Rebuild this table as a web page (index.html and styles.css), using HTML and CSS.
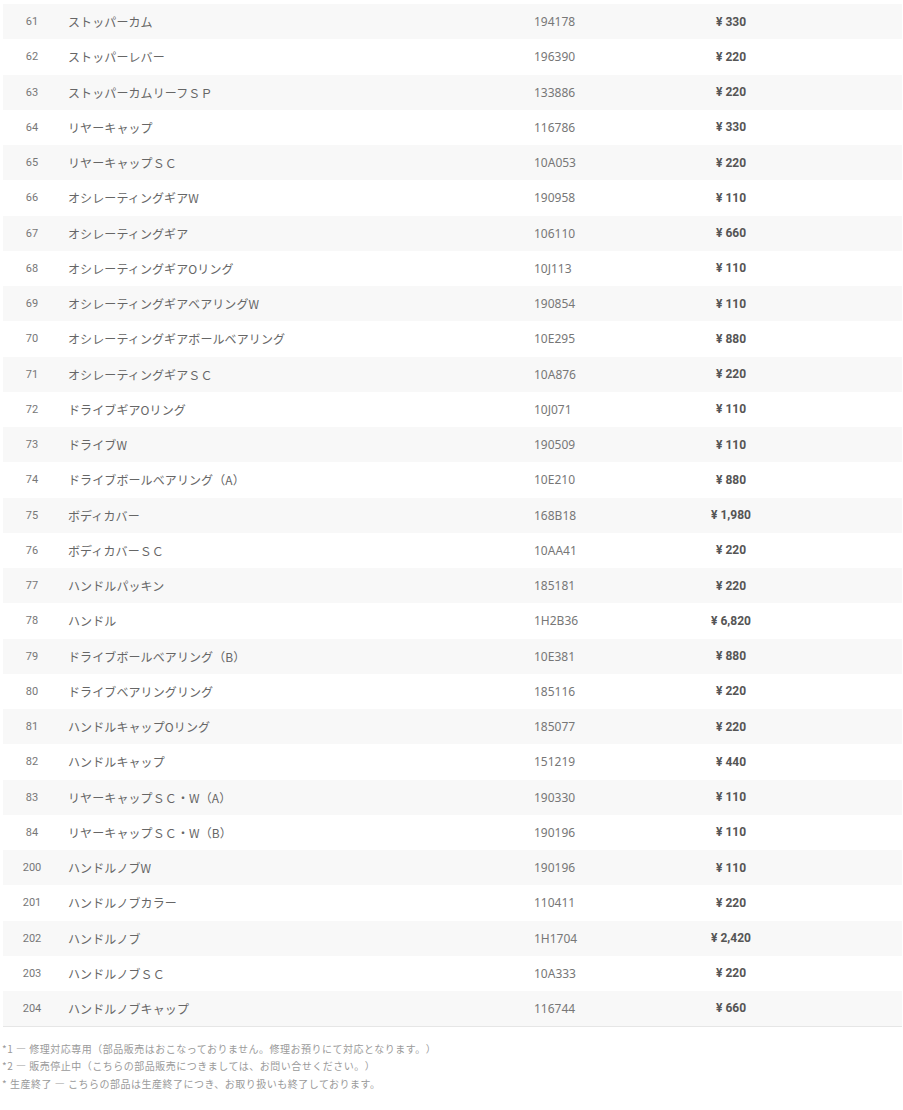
FILE: index.html
```html
<!DOCTYPE html>
<html lang="ja">
<head>
  <meta charset="UTF-8">
  <title>部品リスト</title>
  <link rel="stylesheet" href="styles.css">
</head>
<body>
  <table class="parts">
    <colgroup>
      <col class="c-no"><col class="c-name"><col class="c-code"><col class="c-price"><col>
    </colgroup>
    <tbody>
      <tr><td class="no">61</td><td class="name">ストッパーカム</td><td class="code">194178</td><td class="price"><span class="yen">¥</span>330</td><td></td></tr>
      <tr><td class="no">62</td><td class="name">ストッパーレバー</td><td class="code">196390</td><td class="price"><span class="yen">¥</span>220</td><td></td></tr>
      <tr><td class="no">63</td><td class="name">ストッパーカムリーフＳＰ</td><td class="code">133886</td><td class="price"><span class="yen">¥</span>220</td><td></td></tr>
      <tr><td class="no">64</td><td class="name">リヤーキャップ</td><td class="code">116786</td><td class="price"><span class="yen">¥</span>330</td><td></td></tr>
      <tr><td class="no">65</td><td class="name">リヤーキャップＳＣ</td><td class="code">10A053</td><td class="price"><span class="yen">¥</span>220</td><td></td></tr>
      <tr><td class="no">66</td><td class="name">オシレーティングギアW</td><td class="code">190958</td><td class="price"><span class="yen">¥</span>110</td><td></td></tr>
      <tr><td class="no">67</td><td class="name">オシレーティングギア</td><td class="code">106110</td><td class="price"><span class="yen">¥</span>660</td><td></td></tr>
      <tr><td class="no">68</td><td class="name">オシレーティングギアOリング</td><td class="code">10J113</td><td class="price"><span class="yen">¥</span>110</td><td></td></tr>
      <tr><td class="no">69</td><td class="name">オシレーティングギアベアリングW</td><td class="code">190854</td><td class="price"><span class="yen">¥</span>110</td><td></td></tr>
      <tr><td class="no">70</td><td class="name">オシレーティングギアボールベアリング</td><td class="code">10E295</td><td class="price"><span class="yen">¥</span>880</td><td></td></tr>
      <tr><td class="no">71</td><td class="name">オシレーティングギアＳＣ</td><td class="code">10A876</td><td class="price"><span class="yen">¥</span>220</td><td></td></tr>
      <tr><td class="no">72</td><td class="name">ドライブギアOリング</td><td class="code">10J071</td><td class="price"><span class="yen">¥</span>110</td><td></td></tr>
      <tr><td class="no">73</td><td class="name">ドライブW</td><td class="code">190509</td><td class="price"><span class="yen">¥</span>110</td><td></td></tr>
      <tr><td class="no">74</td><td class="name">ドライブボールベアリング（A）</td><td class="code">10E210</td><td class="price"><span class="yen">¥</span>880</td><td></td></tr>
      <tr><td class="no">75</td><td class="name">ボディカバー</td><td class="code">168B18</td><td class="price"><span class="yen">¥</span>1,980</td><td></td></tr>
      <tr><td class="no">76</td><td class="name">ボディカバーＳＣ</td><td class="code">10AA41</td><td class="price"><span class="yen">¥</span>220</td><td></td></tr>
      <tr><td class="no">77</td><td class="name">ハンドルパッキン</td><td class="code">185181</td><td class="price"><span class="yen">¥</span>220</td><td></td></tr>
      <tr><td class="no">78</td><td class="name">ハンドル</td><td class="code">1H2B36</td><td class="price"><span class="yen">¥</span>6,820</td><td></td></tr>
      <tr><td class="no">79</td><td class="name">ドライブボールベアリング（B）</td><td class="code">10E381</td><td class="price"><span class="yen">¥</span>880</td><td></td></tr>
      <tr><td class="no">80</td><td class="name">ドライブベアリングリング</td><td class="code">185116</td><td class="price"><span class="yen">¥</span>220</td><td></td></tr>
      <tr><td class="no">81</td><td class="name">ハンドルキャップOリング</td><td class="code">185077</td><td class="price"><span class="yen">¥</span>220</td><td></td></tr>
      <tr><td class="no">82</td><td class="name">ハンドルキャップ</td><td class="code">151219</td><td class="price"><span class="yen">¥</span>440</td><td></td></tr>
      <tr><td class="no">83</td><td class="name">リヤーキャップＳＣ・W（A）</td><td class="code">190330</td><td class="price"><span class="yen">¥</span>110</td><td></td></tr>
      <tr><td class="no">84</td><td class="name">リヤーキャップＳＣ・W（B）</td><td class="code">190196</td><td class="price"><span class="yen">¥</span>110</td><td></td></tr>
      <tr><td class="no">200</td><td class="name">ハンドルノブW</td><td class="code">190196</td><td class="price"><span class="yen">¥</span>110</td><td></td></tr>
      <tr><td class="no">201</td><td class="name">ハンドルノブカラー</td><td class="code">110411</td><td class="price"><span class="yen">¥</span>220</td><td></td></tr>
      <tr><td class="no">202</td><td class="name">ハンドルノブ</td><td class="code">1H1704</td><td class="price"><span class="yen">¥</span>2,420</td><td></td></tr>
      <tr><td class="no">203</td><td class="name">ハンドルノブＳＣ</td><td class="code">10A333</td><td class="price"><span class="yen">¥</span>220</td><td></td></tr>
      <tr><td class="no">204</td><td class="name">ハンドルノブキャップ</td><td class="code">116744</td><td class="price"><span class="yen">¥</span>660</td><td></td></tr>
    </tbody>
  </table>

  <div class="notes">
    <p>*1 ― 修理対応専用（部品販売はおこなっておりません。修理お預りにて対応となります。）</p>
    <p>*2 ― 販売停止中（こちらの部品販売につきましては、お問い合せください。）</p>
    <p>* 生産終了 ― こちらの部品は生産終了につき、お取り扱いも終了しております。</p>
  </div>
</body>
</html>
```

FILE: styles.css
```css
body {
  margin: 0;
  padding: 4px 1px 0 3px;
  background: #fff;
  font-family: "Noto Sans", "Noto Sans CJK JP", sans-serif;
  color: #666;
}
.parts {
  width: 899px;
  border-collapse: collapse;
  table-layout: fixed;
  border-bottom: 1px solid #e6e6e6;
}
.c-no { width: 58px; }
.c-name { width: 473px; }
.c-code { width: 114px; }
.c-price { width: 166px; }
.parts tr {
  height: 35.25px;
}
.parts tr:nth-child(odd) {
  background: #f8f8f8;
}
.parts td {
  padding: 0;
  vertical-align: middle;
}
.no {
  text-align: center;
  font-family: Roboto, sans-serif;
  font-size: 11px;
  color: #777;
}
.name {
  padding-left: 7px !important;
  font-family: "Noto Sans CJK JP", sans-serif;
  font-size: 12px;
  color: #666;
  letter-spacing: 0.1px;
}
.code {
  font-size: 12px;
  color: #777;
}
.price {
  text-align: center;
  font-family: Roboto, "Noto Sans CJK JP", sans-serif;
  font-size: 12px;
  font-weight: bold;
  color: #555;
}
.yen {
  margin-right: 3px;
}
.notes {
  margin-top: 13px;
  margin-left: -1px;
}
.notes p {
  margin: 0;
  font-family: "Noto Sans CJK JP", sans-serif;
  font-size: 10px;
  line-height: 17.5px;
  letter-spacing: 0.5px;
  text-spacing-trim: space-all;
  color: #9a9a9a;
}
```
